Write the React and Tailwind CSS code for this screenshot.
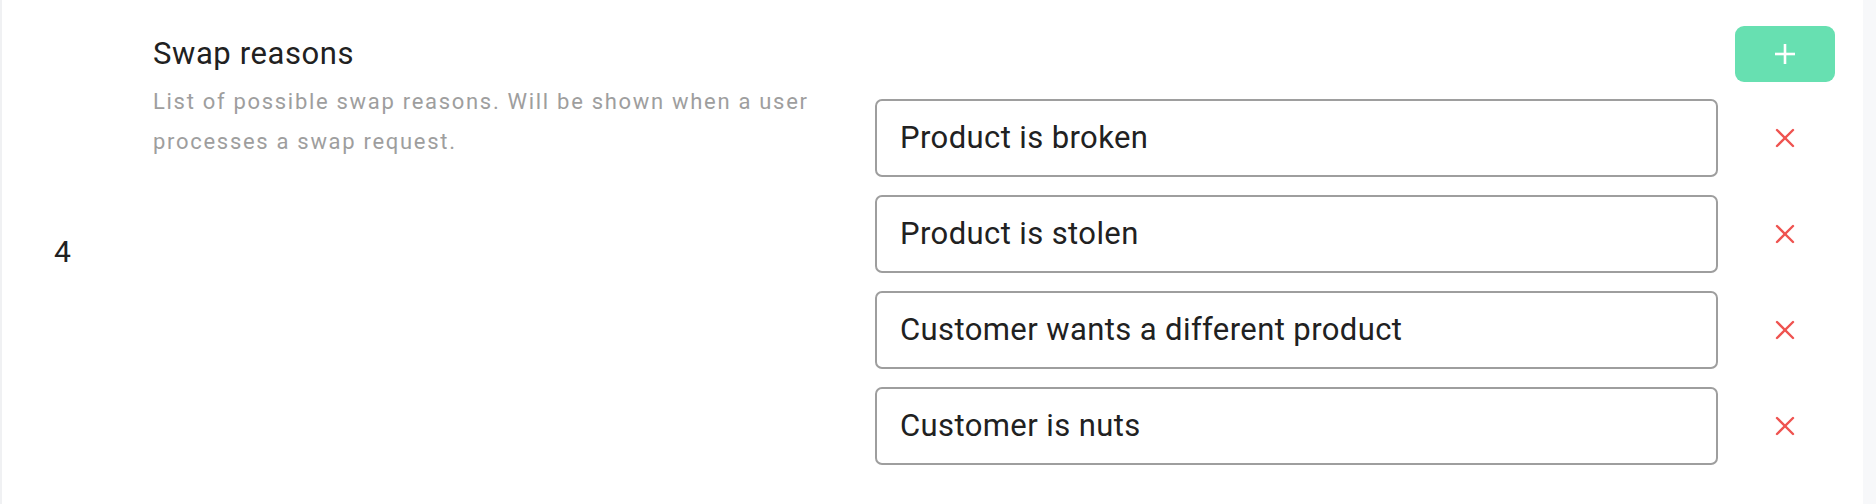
const reasons = [
  'Product is broken',
  'Product is stolen',
  'Customer wants a different product',
  'Customer is nuts',
];

const PlusIcon = () => (
  <svg width="22" height="22" viewBox="0 0 22 22" fill="none" stroke="currentColor" strokeWidth="2.6" strokeLinecap="butt">
    <line x1="11" y1="1" x2="11" y2="21" />
    <line x1="1" y1="11" x2="21" y2="11" />
  </svg>
);

const CrossIcon = () => (
  <svg width="20" height="20" viewBox="0 0 20 20" fill="none" stroke="currentColor" strokeWidth="2.4" strokeLinecap="round">
    <line x1="2" y1="2" x2="18" y2="18" />
    <line x1="18" y1="2" x2="2" y2="18" />
  </svg>
);

export default function App() {
  return (
    <div className="w-full h-[504px] flex bg-[#f7f8fa] font-['Roboto',sans-serif]">
      <div className="w-[1863px] h-full flex bg-white border-l-2 border-[#f0f1f3]">
        {/* row index */}
        <div className="w-[151px] pl-[52px] flex items-center">
          <span className="text-[30px] leading-[36px] text-[#212121]">4</span>
        </div>

        {/* label + help text */}
        <div className="w-[722px] pt-[36px]">
          <h2 className="text-[31px] leading-[36px] tracking-[0.6px] text-[#212121]">Swap reasons</h2>
          <p className="mt-[10px] w-[690px] text-[22px] leading-[40px] tracking-[1.7px] text-[#9e9e9e]">
            List of possible swap reasons. Will be shown when a user processes a swap request.
          </p>
        </div>

        {/* values */}
        <div className="flex-1 pt-[26px] pr-[28px] flex flex-col">
          <div className="flex justify-end">
            <button className="w-[100px] h-[56px] rounded-[9px] bg-[#67e0b1] text-white flex items-center justify-center">
              <PlusIcon />
            </button>
          </div>
          <div className="mt-[17px] flex flex-col gap-[18px]">
            {reasons.map((reason) => (
              <div key={reason} className="flex items-center gap-[17px]">
                <div className="flex-1 h-[78px] border-2 border-[#9e9e9e] rounded-[7px] pl-[23px] flex items-center">
                  <span className="text-[31px] leading-[36px] tracking-[0.4px] text-[#212121]">{reason}</span>
                </div>
                <div className="w-[100px] flex items-center justify-center text-[#ef5350]">
                  <CrossIcon />
                </div>
              </div>
            ))}
          </div>
        </div>
      </div>
    </div>
  );
}
